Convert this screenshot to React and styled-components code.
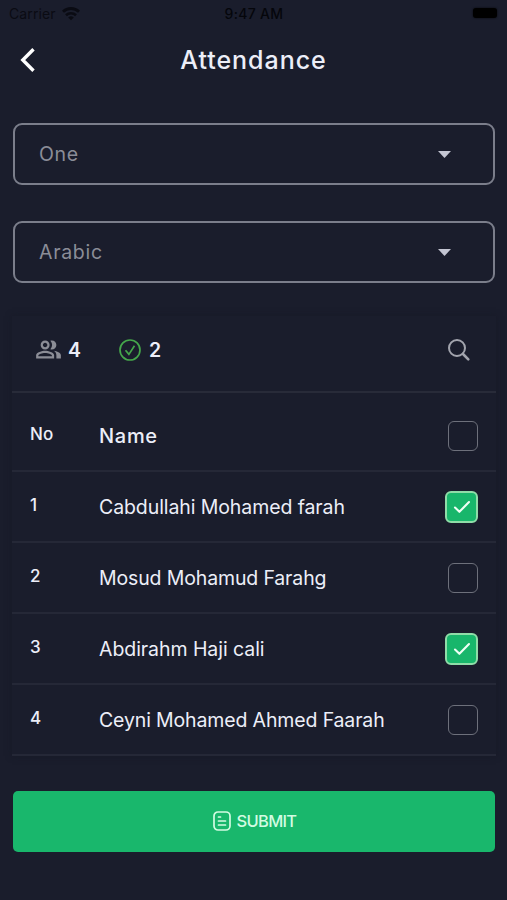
import React, { useState } from 'react';
import styled, { createGlobalStyle } from 'styled-components';
import { MdOutlinePeopleAlt } from 'react-icons/md';

const GlobalStyle = createGlobalStyle`
  * {
    box-sizing: border-box;
  }

  body {
    margin: 0;
    background-color: #1a1d2c;
    font-family: Inter, 'Liberation Sans', sans-serif;
  }
`;

const Screen = styled.div`
  display: flex;
  flex-direction: column;
  height: 900px;
  width: 507px;
  background-color: #1a1d2c;
  color: #eceef8;
  overflow: hidden;
`;

const StatusBar = styled.div`
  display: grid;
  grid-template-columns: 1fr auto 1fr;
  align-items: center;
  height: 28px;
  padding: 0 10px 1px 9px;
  color: #05060b;
  font-size: 14px;
`;

const Carrier = styled.div`
  display: flex;
  align-items: center;
  gap: 6px;
  color: #0a0b13;
  letter-spacing: 0.1px;
`;

const Clock = styled.div`
  padding-left: 2px;
  font-size: 14px;
  font-weight: 500;
  letter-spacing: 0.3px;
`;

const Battery = styled.div`
  justify-self: end;
  width: 24px;
  height: 10px;
  margin-bottom: 1px;
  border-radius: 3px;
  background-color: #000;
  box-shadow: 0 0 2px #05060b;
`;

const Header = styled.header`
  display: grid;
  grid-template-columns: 40px 1fr 40px;
  align-items: center;
  height: 63px;
  padding: 0 19px;
`;

const BackButton = styled.button`
  display: flex;
  padding: 0;
  border: none;
  background: none;
  color: #fff;
  cursor: pointer;
`;

const Title = styled.h1`
  margin: 0;
  text-align: center;
  font-size: 25px;
  font-weight: 450;
  letter-spacing: 0.95px;
`;

const Selects = styled.div`
  display: flex;
  flex-direction: column;
  gap: 36px;
  padding: 32px 12px 0 13px;
`;

const Select = styled.div`
  display: flex;
  align-items: center;
  justify-content: space-between;
  height: 62px;
  padding: 0 42px 0 24px;
  border: 2px solid #7b7e8b;
  border-radius: 9px;
  color: #8b8d98;
  font-size: 19.5px;
  letter-spacing: 0.7px;
`;

const Card = styled.section`
  margin: 33px 11px 0 12px;
  box-shadow: 0 0 6px #171a27;
`;

const Toolbar = styled.div`
  display: flex;
  align-items: center;
  height: 77px;
  padding: 0 25px 8px 23px;
  border-bottom: 2px solid #282b39;
`;

const Stat = styled.div`
  display: flex;
  align-items: center;
  gap: ${(props) => props.$gap}px;
  width: 83px;
  font-size: 19.5px;
  font-weight: 600;

  span {
    padding-top: 1px;
  }
`;

const SearchButton = styled.button`
  display: flex;
  margin-left: auto;
  padding: 0;
  border: none;
  background: none;
  color: #a2a4ad;
  cursor: pointer;
`;

const Row = styled.div`
  display: grid;
  grid-template-columns: 69px 1fr auto;
  align-items: center;
  height: ${(props) => (props.$head ? 79 : 71)}px;
  padding: ${(props) => (props.$head ? '9px' : '1px')} 18px 0;
  border-bottom: 2px solid #252837;
`;

const No = styled.span`
  padding-bottom: 4px;
  font-size: 17px;
  font-weight: 450;
  letter-spacing: ${(props) => (props.$head ? 0.2 : 0)}px;
`;

const Name = styled.span`
  font-size: ${(props) => (props.$head ? 20 : 19.5)}px;
  font-weight: ${(props) => (props.$head ? 500 : 400)};
  letter-spacing: ${(props) => props.$spacing || 0}px;
  white-space: nowrap;
`;

const CheckBox = styled.button`
  display: flex;
  align-items: center;
  justify-content: center;
  width: ${(props) => (props.$checked ? 33 : 30)}px;
  height: ${(props) => (props.$checked ? 32 : 30)}px;
  padding: 0;
  border: ${(props) => (props.$checked ? '2px solid #8fdda8' : '1px solid #6d707b')};
  border-radius: 6px;
  background-color: ${(props) => (props.$checked ? '#18b66b' : 'transparent')};
  cursor: pointer;
`;

const SubmitButton = styled.button`
  display: flex;
  align-items: center;
  justify-content: center;
  gap: 6px;
  height: 61px;
  margin: 35px 12px 0 13px;
  padding: 0 0 1px 1px;
  border: none;
  border-radius: 5px;
  background-color: #19b76c;
  color: #d3fbe2;
  font-family: inherit;
  font-size: 16.5px;
  font-weight: 450;
  letter-spacing: -0.7px;
  cursor: pointer;
`;

const WifiIcon = () => (
  <svg width="18" height="14" viewBox="0 0 18 14" fill="none" stroke="currentColor">
    <path d="M1 4.8a11.4 11.4 0 0 1 16 0" strokeWidth="2.8" />
    <path d="M4 8.2a7.2 7.2 0 0 1 10 0" strokeWidth="2.6" />
    <path d="M9 13.3 6.2 10.6a4 4 0 0 1 5.6 0z" fill="currentColor" stroke="none" />
  </svg>
);

const BackIcon = () => (
  <svg width="18" height="26" viewBox="0 0 18 26" fill="none" stroke="currentColor" strokeWidth="3.4">
    <path d="M14.5 2.2 3.8 13l10.7 10.8" />
  </svg>
);

const CaretIcon = () => (
  <svg width="13" height="7" viewBox="0 0 13 7" fill="#c3c5d2">
    <path d="M0 0h13L6.5 7z" />
  </svg>
);

const CheckCircleIcon = () => (
  <svg width="24" height="24" viewBox="0 0 24 24" fill="none" stroke="#45a74b" strokeWidth="1.7">
    <circle cx="12" cy="12" r="10" />
    <path d="m7.5 12.2 3.4 4.2 5.6-8.6" />
  </svg>
);

const SearchIcon = () => (
  <svg width="24" height="24" viewBox="0 0 24 24" fill="none" stroke="currentColor" strokeLinecap="round">
    <circle cx="10" cy="10" r="8" strokeWidth="2" />
    <path d="m16 16 5.3 5.4" strokeWidth="2.6" />
  </svg>
);

const TickIcon = () => (
  <svg width="18" height="14" viewBox="0 0 18 14" fill="none" stroke="#effff5" strokeWidth="2.1" strokeLinecap="round" strokeLinejoin="round">
    <path d="m2 7.5 4.4 4.3L16 2" />
  </svg>
);

const FormIcon = () => (
  <svg width="18" height="20" viewBox="0 0 18 20" fill="none" stroke="currentColor" strokeWidth="1.7" strokeLinecap="round">
    <rect x="1" y="1" width="16" height="18" rx="4" />
    <path d="M5.5 6h2M5.5 10h7M5.5 14h7" />
  </svg>
);

const initialStudents = [
  { name: 'Cabdullahi Mohamed farah', present: true, spacing: -0.09 },
  { name: 'Mosud Mohamud Farahg', present: false, spacing: -0.14 },
  { name: 'Abdirahm Haji cali', present: true, spacing: -0.06 },
  { name: 'Ceyni Mohamed Ahmed Faarah', present: false, spacing: -0.14 },
];

const App = () => {
  const [students, setStudents] = useState(initialStudents);

  const presentCount = students.filter((student) => student.present).length;
  const allPresent = presentCount === students.length;

  const toggleStudent = (index) => {
    setStudents(students.map((student, i) => (
      i === index ? { ...student, present: !student.present } : student
    )));
  };

  const toggleAll = () => {
    setStudents(students.map((student) => ({ ...student, present: !allPresent })));
  };

  return (
    <Screen>
      <GlobalStyle />
      <StatusBar>
        <Carrier>Carrier <WifiIcon /></Carrier>
        <Clock>9:47 AM</Clock>
        <Battery />
      </StatusBar>
      <Header>
        <BackButton aria-label="Back"><BackIcon /></BackButton>
        <Title>Attendance</Title>
      </Header>
      <Selects>
        <Select>One <CaretIcon /></Select>
        <Select>Arabic <CaretIcon /></Select>
      </Selects>
      <Card>
        <Toolbar>
          <Stat $gap={6}>
            <MdOutlinePeopleAlt size={27} color="#8b8d96" />
            <span>{students.length}</span>
          </Stat>
          <Stat $gap={7}>
            <CheckCircleIcon />
            <span>{presentCount}</span>
          </Stat>
          <SearchButton aria-label="Search"><SearchIcon /></SearchButton>
        </Toolbar>
        <Row $head>
          <No $head>No</No>
          <Name $head $spacing={0.7}>Name</Name>
          <CheckBox $checked={allPresent} onClick={toggleAll}>{allPresent && <TickIcon />}</CheckBox>
        </Row>
        {students.map((student, index) => (
          <Row key={student.name}>
            <No>{index + 1}</No>
            <Name $spacing={student.spacing}>{student.name}</Name>
            <CheckBox $checked={student.present} onClick={() => toggleStudent(index)}>
              {student.present && <TickIcon />}
            </CheckBox>
          </Row>
        ))}
      </Card>
      <SubmitButton><FormIcon /> SUBMIT</SubmitButton>
    </Screen>
  );
};

export default App;
